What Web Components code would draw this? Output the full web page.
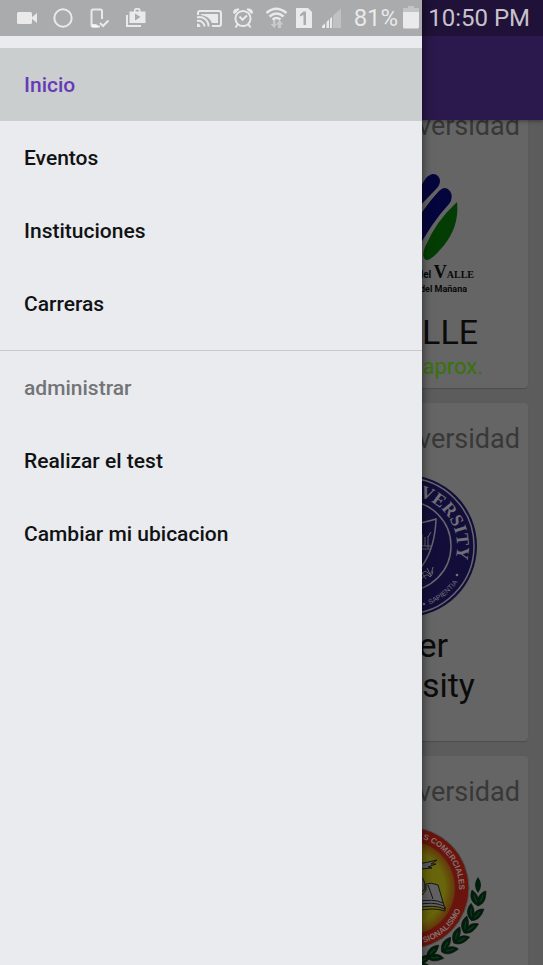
<!DOCTYPE html>
<html lang="es">
<head>
<meta charset="utf-8">
<meta name="viewport" content="width=device-width, initial-scale=1">
<title>Universidades</title>
<style>
  html, body { height: 100%; margin: 0; }
  body { font-family: Roboto, "Liberation Sans", sans-serif; background: #5c5c5c; overflow: hidden; }
</style>
</head>
<body>
<app-shell>
  <app-toolbar slot="toolbar"></app-toolbar>
  <university-card kind="Universidad" name="UNIVALLE" price="Bs. 14000 aprox.">
    <svg viewBox="321 146 160 166" width="160" height="166" aria-hidden="true">
      <g fill="#05053d">
        <path d="M405 210 L426 178 Q433 171 438 176 Q442 181 438 187 L414 212Z"/>
        <path d="M408 234 Q424 207 439 191 Q445 185 450 191 Q454 197 449 204 Q432 222 416 252Z"/>
      </g>
      <path fill="#043d04" d="M457 202 Q460 229 439 251 Q430 261 426 260 Q421 257 425 247 Q436 221 457 202Z"/>
      <text x="474" y="278" text-anchor="end" fill="#080808" font-family="Liberation Serif, serif" font-weight="700" font-size="10"><tspan font-family="Roboto, sans-serif">del </tspan><tspan font-size="18">V</tspan>ALLE</text>
      <text x="467" y="292" text-anchor="end" fill="#080808" font-family="Roboto, sans-serif" font-weight="700" font-size="9">del Mañana</text>
    </svg>
  </university-card>
  <university-card kind="Universidad" name="Keiser University">
    <svg viewBox="321 459 160 166" width="160" height="166" aria-hidden="true">
      <defs>
        <path id="ringTop" d="M406 495 A51 51 0 0 1 406 597"/>
        <path id="ringLow" d="M406 609 A63 63 0 0 0 469 546"/>
      </defs>
      <circle cx="406" cy="546" r="71" fill="#130e39"/>
      <circle cx="406" cy="546" r="68" fill="none" stroke="#67676f" stroke-width="1.5"/>
      <circle cx="406" cy="546" r="45" fill="none" stroke="#67676f" stroke-width="1.5"/>
      <text fill="#70707a" font-family="Liberation Serif, serif" font-weight="700" font-size="18"><textPath href="#ringTop" startOffset="13">VERSITY</textPath></text>
      <text fill="#70707a" font-family="Liberation Sans, sans-serif" font-size="7"><textPath href="#ringLow" startOffset="24">SAPIENTIA</textPath></text>
      <circle cx="457" cy="575" r="1.3" fill="#70707a"/>
      <circle cx="424" cy="604" r="1.3" fill="#70707a"/>
      <g fill="none" stroke="#67676f">
        <path stroke-width="1.5" d="M410 524 Q424 523 436 519 Q435 548 422 566 L410 578"/>
        <path stroke-width="1" d="M418 546 H431 M419 549 H430 M422 534 V546 M425 537 V546 M428 536 V548 M431 532 L428 537 M421 575 Q425 569 428 573 T433 567 M422 578 Q427 573 429 576 T433 571 M421 571 L426 579 M427 568 L431 576"/>
      </g>
    </svg>
  </university-card>
  <university-card kind="Universidad" name="">
    <svg viewBox="321 812 160 166" width="160" height="166" aria-hidden="true">
      <defs>
        <radialGradient id="sun"><stop offset=".78" stop-color="#68650b"/><stop offset="1" stop-color="#63370b"/></radialGradient>
        <path id="sealTop" d="M408 837 A51 51 0 0 1 408 939"/>
        <path id="sealLow" d="M408 945 A57 57 0 0 0 465 888"/>
        <g id="leaf"><path fill="#031d0c" stroke="#061008" stroke-width=".6" d="M0 8 C-8 4 -8 -3 -6 -8 C-2 -5 0 -2 0 1 C1 -3 4 -6 8 -7 C8 1 6 6 0 8Z"/><path fill="none" stroke="#07391a" stroke-width="1.4" d="M-4 -3 Q-3 2 -1 4 M5 -3 Q4 1 2 4"/></g>
      </defs>
      <circle cx="408" cy="888" r="61" fill="#69140d" stroke="#54504e"/>
      <circle cx="408" cy="888" r="47" fill="url(#sun)"/>
      <text fill="#85736f" font-family="Liberation Sans, sans-serif" font-weight="700" font-size="8"><textPath href="#sealTop" startOffset="15">S COMERCIALES</textPath></text>
      <text fill="#85736f" font-family="Liberation Sans, sans-serif" font-weight="700" font-size="8"><textPath href="#sealLow" startOffset="16">SIONALISMO</textPath></text>
      <g stroke="#151515" stroke-width="1" stroke-linejoin="round">
        <path fill="#5d5d5d" d="M416 864 Q426 863 437 860 L431 864 L436 864 L428 867 L432 868 L420 869 Z"/>
        <path fill="#555" d="M417 874 Q426 878 425 889 L417 896Z"/>
        <path fill="#616161" d="M426 884 Q431 882 438 885 L445 909 Q434 904 416 908 L416 899 Q423 896 426 890Z"/>
        <path fill="none" d="M416 902 Q433 898 443 903 M416 905 Q433 901 444 906 M416 911 Q434 907 445 911 L445 907 M428 885 L433 899"/>
      </g>
      <path d="M478 877 Q484 885 478 893 Q472 885 478 877Z" fill="#031d0c"/>
      <use href="#leaf" transform="translate(478 898)"/>
      <use href="#leaf" transform="translate(474 913) rotate(20)"/>
      <use href="#leaf" transform="translate(468 926) rotate(30)"/>
      <use href="#leaf" transform="translate(459 937) rotate(42)"/>
      <use href="#leaf" transform="translate(448 947) rotate(52)"/>
      <use href="#leaf" transform="translate(434 954) rotate(65)"/>
      <use href="#leaf" transform="translate(424 963) rotate(80)"/>
    </svg>
  </university-card>
  <nav-drawer slot="drawer">
    <nav-item href="#inicio" active>Inicio</nav-item>
    <nav-item href="#eventos">Eventos</nav-item>
    <nav-item href="#instituciones">Instituciones</nav-item>
    <nav-item href="#carreras">Carreras</nav-item>
    <nav-heading>administrar</nav-heading>
    <nav-item href="#test">Realizar el test</nav-item>
    <nav-item href="#ubicacion">Cambiar mi ubicacion</nav-item>
  </nav-drawer>
  <status-bar slot="status"></status-bar>
</app-shell>

<script>
const define = (name, html, setup) => {
  const tpl = document.createElement('template');
  tpl.innerHTML = html;
  customElements.define(name, class extends HTMLElement {
    constructor() {
      super();
      this.attachShadow({ mode: 'open' }).append(tpl.content.cloneNode(true));
    }
    connectedCallback() { if (setup) setup(this, this.shadowRoot); }
  });
};

define('app-shell', `
  <style>
    :host { display: flex; flex-direction: column; position: relative; height: 100vh; overflow: hidden; }
    /* The list is scrolled 30px under the toolbar. */
    main { display: flex; flex-direction: column; gap: 15px; margin-top: -30px; padding: 0 15px 15px; }
  </style>
  <slot name="toolbar"></slot>
  <main><slot></slot></main>
  <slot name="drawer"></slot>
  <slot name="status"></slot>
`);

define('app-toolbar', `
  <style>
    :host { display: block; position: relative; z-index: 1; flex: none; height: 120px; background: #2b184c; box-shadow: 0 1px 4px rgba(0,0,0,.4); }
  </style>
`);

define('university-card', `
  <style>
    :host { display: block; padding: 16px 8px 6px; border-radius: 4px; background: #656565; box-shadow: 0 1px 1px rgba(0,0,0,.15); }
    .kind { margin: 0; text-align: right; font-size: 27px; line-height: 40px; color: #383838; }
    .body { display: grid; grid-template-columns: minmax(0, 1fr) 238px; }
    .info { grid-column: 2; text-align: center; }
    .logo { display: flex; justify-content: center; height: 166px; }
    ::slotted(svg) { overflow: visible; flex: none; }
    h2 { margin: 0 auto; max-width: 180px; font-size: 34px; line-height: 40px; font-weight: 400; color: #0b0b0b; }
    .price { margin: 0; min-height: 30px; font-size: 22px; line-height: 30px; color: #37730a; }
  </style>
  <p class="kind"></p>
  <div class="body"><div class="info">
    <div class="logo"><slot></slot></div>
    <h2></h2>
    <p class="price"></p>
  </div></div>
`, (el, root) => {
  root.querySelector('.kind').textContent = el.getAttribute('kind');
  root.querySelector('h2').textContent = el.getAttribute('name');
  root.querySelector('.price').textContent = el.getAttribute('price') || '';
});

define('nav-drawer', `
  <style>
    :host { display: block; position: absolute; z-index: 2; inset: 0 121px 0 0; background: #e9ebee; box-shadow: 0 0 10px rgba(0,0,0,.6); }
    nav { display: flex; flex-direction: column; padding-top: 48px; }
  </style>
  <nav aria-label="Principal"><slot></slot></nav>
`);

define('nav-item', `
  <style>
    :host { display: block; }
    a { display: flex; align-items: center; height: 73px; padding: 0 24px; font-size: 21px; font-weight: 500; color: #111214; text-decoration: none; }
    :host([active]) a { background: #cbcecf; color: #673ab7; }
  </style>
  <a><slot></slot></a>
`, (el, root) => {
  const a = root.querySelector('a');
  a.href = el.getAttribute('href');
  if (el.hasAttribute('active')) a.setAttribute('aria-current', 'page');
});

define('nav-heading', `
  <style>
    :host { display: flex; align-items: center; height: 73px; margin-top: 10px; padding: 0 24px; border-top: 1px solid #c6c8cb; font-size: 21px; font-weight: 500; color: #737477; }
  </style>
  <slot></slot>
`);

define('status-bar', `
  <style>
    :host { display: flex; justify-content: space-between; position: absolute; z-index: 3; inset: 0 0 auto 0; height: 36px; box-sizing: border-box; padding: 0 13px 0 16px; background: rgba(0,0,0,.27); color: rgba(255,255,255,.75); font-size: 24px; line-height: 36px; white-space: nowrap; }
    div { display: flex; align-items: center; }
    .left { gap: 14px; }
    .right { gap: 8px; }
    .power { gap: 5px; margin-left: 4px; }
    time { margin-left: 1px; }
    svg { flex: none; fill: currentColor; }
    .line { fill: none; stroke: currentColor; stroke-width: 2; }
  </style>
  <div class="left">
    <svg width="22" height="36" viewBox="0 0 22 36"><rect x="1" y="12" width="15" height="12" rx="1.5"/><path d="M15 18 L21 13 V23Z"/></svg>
    <svg width="22" height="36" viewBox="0 0 22 36"><circle class="line" cx="11" cy="18" r="8.7"/></svg>
    <svg width="22" height="36" viewBox="0 0 22 36"><path class="line" d="M14 19 V11 Q14 9.500 12.500 9.500 H5 Q3.500 9.500 3.500 11 V25 Q3.500 26.500 5 26.500 H10"/><path d="M4 24 H8 L10 25.500 H12 V27.500 H4Z"/><path class="line" d="M12 23 L15 26 L20.500 20.500"/></svg>
    <svg width="22" height="36" viewBox="0 0 22 36"><path class="line" d="M3 15 V26 H17"/><path fill-rule="evenodd" d="M5.500 11.500 H10 V10 Q10 8 12 8 H14.500 Q16.500 8 16.500 10 V11.500 H21.500 V23 H5.500Z M11.700 11.500 H14.800 V9.800 H11.700Z M11 13.500 V20.500 L16.500 17Z"/></svg>
  </div>
  <div class="right">
    <svg width="28" height="36" viewBox="0 0 28 36"><path class="line" d="M2 15 V13 Q2 11 4 11 H23 Q25 11 25 13 V24 Q25 26 23 26 H16"/><path d="M5 14 H22 V23 H16 Q13 16 5 15Z"/><path class="line" d="M1 17.500 A9 9 0 0 1 12.500 26.500 M1 21 A6 6 0 0 1 8.500 26.500"/><path d="M1 23.500 A3.500 3.500 0 0 1 4.500 27 H1Z"/></svg>
    <svg width="22" height="36" viewBox="0 0 22 36"><circle class="line" cx="11" cy="18.500" r="7.600"/><path class="line" d="M7.500 16.500 L10.500 19.800 L15 15.500 M5.500 24.500 L3.500 27.500 M16.500 24.500 L18.500 27.500"/><path d="M1 13 Q1 8.500 6.500 8.200 L7.500 9.500 L2.500 14Z M21 13 Q21 8.500 15.500 8.200 L14.500 9.500 L19.500 14Z"/></svg>
    <svg width="26" height="36" viewBox="0 0 26 36"><path class="line" style="stroke-width:2.5" d="M4.500 13 Q14 4.500 24.500 13 M7.500 16.500 Q14.500 10.500 21.500 16.500 M10.500 19.500 Q14.500 16.500 18.500 19.500"/><path opacity=".5" d="M12.300 28 L8.500 24 H11 V20 H13.500 V24 H15 Z M17.500 20 L21.500 24.500 H19 V28 H16 V24.500 H14 Z"/></svg>
    <svg width="16" height="36" viewBox="0 0 16 36"><path fill-rule="evenodd" d="M0 8 H12 L16 12 V28 H0Z M7.500 11.500 L4 14.500 V16.500 L7.500 15 V25 H10 V11.500Z"/></svg>
    <svg width="22" height="36" viewBox="0 0 22 36"><path opacity=".35" d="M13 15.500 L21 8.500 V28 H13Z"/><path d="M2 28 V26 L5 23.500 V28Z M6.500 28 V22 L9 19.500 V28Z M10 28 V18.500 L12 17 V28Z"/></svg>
    <div class="power"><span>81%</span>
      <svg width="16" height="36" viewBox="0 0 16 36"><path opacity=".4" d="M0 8 H5 V6 H11 V8 H16 V12 H0Z"/><path d="M0 12 H16 V27 Q16 28.500 14.500 28.500 H1.500 Q0 28.500 0 27Z"/></svg>
    </div>
    <time datetime="22:50">10:50 PM</time>
  </div>
`);
</script>
</body>
</html>
